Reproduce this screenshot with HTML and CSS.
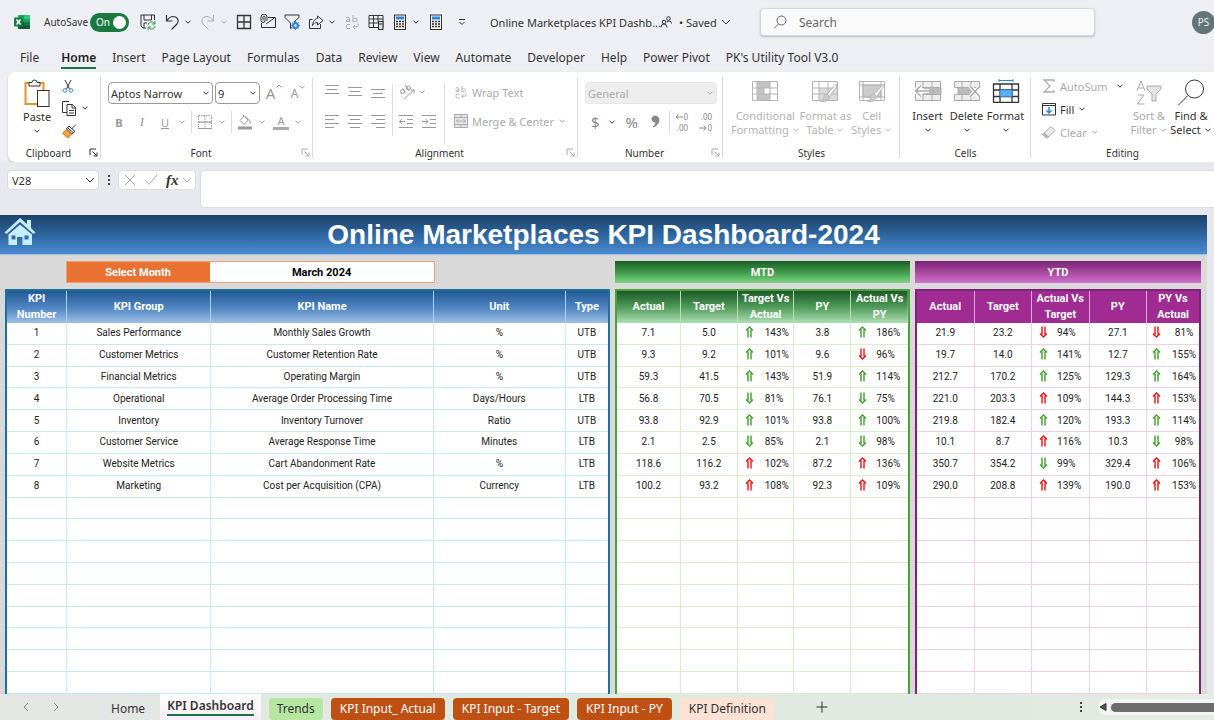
FILE: index.html
```html
<!DOCTYPE html>
<html lang="en">
<head>
<meta charset="utf-8">
<meta name="viewport" content="width=device-width, initial-scale=1">
<title>Online Marketplaces KPI Dashboard</title>
<link rel="stylesheet" href="styles.css">
</head>
<body>
<svg class="sprite" aria-hidden="true">
  <symbol id="chev" viewBox="0 0 8 8"><path d="M1.5 2.7 4 5.2l2.500-2.500"/></symbol>
  <symbol id="chevwide" viewBox="0 0 10 8"><path d="M1 2l4 4 4-4"/></symbol>
  <symbol id="launcher" viewBox="0 0 9 9"><path d="M1 7V1h6M3.500 3.500l4.500 4.500M8 4.500V8H4.500"/></symbol>
  <symbol id="up" viewBox="0 0 9 12"><path d="M1 4.500 4.500 1 8 4.500M3 3.500V11.500M6 3.500V11.500"/></symbol>
  <symbol id="down" viewBox="0 0 9 12"><path d="M1 7.500 4.500 11 8 7.500M3 8.500V.5M6 8.500V.5"/></symbol>
  <symbol id="calc" viewBox="0 0 16 16"><rect x="2.500" y="1" width="11" height="14.500" fill="#f6f2ee"/><rect x="4" y="2.500" width="8" height="3" fill="#2b88d8" stroke="none"/><path d="M4 7.500h8M4 10h8M4 12.500h8" stroke-width="1.500" stroke-dasharray="2 1"/></symbol>
  <symbol id="brush" viewBox="0 0 20 20"><path d="M18.500 1 9 11l2.500 2.500L19 3z" fill="#fff"/><path d="M9 11c-3 0-3 3-3.500 4.500S3 18 2 18c4 1.500 9 0 9.500-4.500z" fill="#ccc"/></symbol>
</svg>

<header class="titlebar">
  <svg class="i16 logo" viewBox="0 0 16 16"><rect x="4" y="1" width="12" height="14" rx="1" fill="#21a366"/><path d="M10 1h5q1 0 1 1v3h-6z" fill="#33c481"/><path d="M4 8h12v6q0 1-1 1H5q-1 0-1-1z" fill="#185c37"/><path d="M10 8h6v3.500h-6z" fill="#107c41"/><rect y="3.500" width="9" height="9" rx="1" fill="#107c41"/><path d="m2.500 5.500 4 5m0-5-4 5" stroke="#fff" stroke-width="1.500"/></svg>
  <label class="autosave"><span>AutoSave</span><input type="checkbox" checked><span class="toggle"><span>On</span></span></label>
  <div class="quick">
    <button aria-label="Save"><svg class="i16" viewBox="0 0 16 16"><path d="M6 14H3l-2-2V1h13.500v5M4 1v5h7.500V1M4 14V9h3"/><path d="M8 11a3.500 3.500 0 0 1 6-2l1 1M15 7v3h-3M15 12a3.500 3.500 0 0 1-6 2l-1-1M8 16v-3h3" stroke="#2ea043"/></svg></button>
    <span class="split"><button aria-label="Undo"><svg class="i16" viewBox="0 0 16 16"><path d="M2.500 1v6h6M2.500 7C5 3.500 8 1.500 11.500 3S14.500 8 13 10L7.500 15.500" stroke-width="1.200"/></svg></button><button aria-label="Undo list"><svg class="i8"><use href="#chev"/></svg></button></span>
    <span class="split dim"><button aria-label="Redo"><svg class="i16" viewBox="0 0 16 16"><path d="M13.500 1v6h-6M13.500 7C11 3.500 8 1.500 4.500 3S1.500 8 3 10l5.500 5.500"/></svg></button><button aria-label="Redo list"><svg class="i8"><use href="#chev"/></svg></button></span>
    <button aria-label="Borders"><svg class="i16" viewBox="0 0 16 16"><path d="M1.500 1.500h13v13h-13zM8 1.500v13M1.500 8h13" stroke-width="1.300"/></svg></button>
    <button aria-label="Email"><svg class="i16" viewBox="0 0 16 16"><path d="M8 3.500h7.500v10H1.500V9M6 10l9-6.500M3 6.500V3.200a1 1 0 0 1 2 0V6.500a2 2 0 0 1-4 0V3a2.500 2.500 0 0 1 6 0v4"/></svg></button>
    <button aria-label="Filter settings"><svg class="i16" viewBox="0 0 16 16"><path d="M1 1h14v2.500L10 8M1 1v2.500L6.500 9v5.500L8 13.500"/><circle cx="11.500" cy="11.500" r="2.500" stroke="#2b88d8" stroke-width="2"/><path d="M11.500 7v9M7 11.500h9M8.500 8.500l6 6M14.500 8.500l-6 6" stroke="#2b88d8"/><circle cx="11.500" cy="11.500" r="1.200" fill="#fff" stroke="none"/></svg></button>
    <span class="split"><button aria-label="Share"><svg class="i16" viewBox="0 0 16 16"><path d="M4.500 5.500H1.500v9h11V10M9.500 2l5.500 4.500-5.500 4.500V8.500C7 8.500 5.500 9.500 4.500 11.500 5 7 7 4.800 9.500 4.500z"/></svg></button><button aria-label="Share options"><svg class="i8"><use href="#chev"/></svg></button></span>
    <button class="dim" aria-label="Wrap"><svg class="i16" viewBox="0 0 16 16"><path d="M2 3.500q3-1.500 3.500 1V8M5.500 5.500Q2 5.500 2 7t3.500 0M9 1v7M9 5q4-2 4 1T9 7M6 10.500q-4-1-4 2t4 2M14 9.500q2 3.500-5 3.500M11 11l-2 2 2 2"/></svg></button>
    <button aria-label="Table"><svg class="i16" viewBox="0 0 16 16"><path d="M1 1.500h14v12H1zM1 5h14M1 9h9M5.500 1.500v12M10 1.500v6"/><rect x="10.500" y="7.500" width="4.500" height="8" fill="#ddd"/><path d="M11 10h3.500"/></svg></button>
    <span class="split"><button aria-label="Calculate"><svg class="i16"><use href="#calc"/></svg></button><button aria-label="Calculate options"><svg class="i8"><use href="#chev"/></svg></button></span>
    <button aria-label="Calculate sheet"><svg class="i16"><use href="#calc"/></svg></button>
    <button class="more" aria-label="Customize toolbar"><svg class="i8" viewBox="0 0 8 8"><path d="M1 1.500h6M1.500 4 4 6.500 6.500 4"/></svg></button>
  </div>
  <div class="doc"><span class="docname">Online Marketplaces KPI Dashb...</span><svg class="i12" viewBox="0 0 12 12"><circle cx="8.500" cy="2.500" r="1.800"/><path d="M6.500 6Q11 3.500 11.500 7.500"/><circle cx="4" cy="6" r="1.800"/><path d="M1 11.500q0-3.500 3-3.500t3 3.500"/></svg><button class="saved">• Saved <svg class="i10"><use href="#chevwide"/></svg></button></div>
  <label class="search"><svg class="i14" viewBox="0 0 14 14"><circle cx="8.500" cy="5.500" r="4.500"/><path d="M5.500 9 1 13.500"/></svg><input type="search" aria-label="Search" placeholder="Search"></label>
  <button class="avatar" aria-label="Account">PS</button>
</header>

<nav class="menu">
  <a href="#">File</a><a href="#" class="current">Home</a><a href="#">Insert</a><a href="#">Page Layout</a><a href="#">Formulas</a><a href="#">Data</a><a href="#">Review</a><a href="#">View</a><a href="#">Automate</a><a href="#">Developer</a><a href="#">Help</a><a href="#">Power Pivot</a><a href="#">PK's Utility Tool V3.0</a>
</nav>

<section class="ribbon" aria-label="Home ribbon">
  <div class="group clipboard">
    <div class="tools">
      <button class="big"><svg class="paste" viewBox="0 0 26 29"><path d="M6 4H1.500v21H13M15 4h4.500v7" stroke="#e8912d" stroke-width="2"/><path d="M5 7V3.500h3q0-2.500 2.500-2.500T13 3.500h3V7z" fill="#fff"/><rect x="13.500" y="11.500" width="11.500" height="16" fill="#fff"/></svg><span>Paste</span><svg class="i8"><use href="#chev"/></svg></button>
      <div class="stack">
        <button aria-label="Cut"><svg class="i14" viewBox="0 0 14 14"><path d="M4 1l4.500 9M10 1 5.500 10"/><circle cx="4" cy="11.500" r="1.800" stroke="#2b88d8"/><circle cx="10" cy="11.500" r="1.800" stroke="#2b88d8"/></svg></button>
        <span class="split"><button aria-label="Copy"><svg class="i16" viewBox="0 0 16 16"><path d="M6 12.500H1.500v-11H8M6 4.500h5.500L14.500 7.500v8H6zM11 4.500v3.500h3.500M8 10.500h5M8 13h5"/></svg></button><button aria-label="Copy options"><svg class="i8"><use href="#chev"/></svg></button></span>
        <button aria-label="Format painter"><svg class="i16" viewBox="0 0 16 16"><path d="M15 1.500 10.500 6M6.500 4.500l5.500 5M8 3l6 5.500-3 2.500L5.500 6z"/><path d="M5.500 6.500 10.500 11 7 15Q4 13 1.500 10z" fill="#f7a13c" stroke="#d97a16"/></svg></button>
      </div>
    </div>
    <div class="caption launch">Clipboard<button aria-label="Clipboard settings"><svg class="i9"><use href="#launcher"/></svg></button></div>
  </div>

  <div class="group font">
    <div class="tools rows">
      <div class="row">
        <span class="pick face"><select aria-label="Font"><option>Aptos Narrow</option></select><svg class="i8"><use href="#chev"/></svg></span>
        <span class="pick size"><select aria-label="Font size"><option>9</option></select><svg class="i8"><use href="#chev"/></svg></span>
        <button class="grow" aria-label="Increase font size">A<svg class="i8" viewBox="0 0 8 8"><path d="M1.500 4.500 4 2l2.500 2.500"/></svg></button><button class="grow small" aria-label="Decrease font size">A<svg class="i8"><use href="#chev"/></svg></button>
      </div>
      <div class="row marks">
        <button class="b">B</button><button class="i">I</button>
        <span class="split"><button class="u">U</button><svg class="i8"><use href="#chev"/></svg></span>
        <i class="bar"></i>
        <span class="split"><button aria-label="Cell borders"><svg class="i14" viewBox="0 0 14 14"><path d="M.5.5h13v13H.5zM7 1v12M1 7h12" stroke-dasharray="1.500 1"/><path d="M0 13.500h14M0 7h14"/></svg></button><svg class="i8"><use href="#chev"/></svg></span>
        <i class="bar"></i>
        <span class="split"><button aria-label="Fill color"><svg class="i16" viewBox="0 0 16 16"><path d="M7 2 3 6.500l4 4 4.500-5zM6 1l5 5M12 6q2 2 1 4"/><path d="M1 14h14" stroke-width="3"/></svg></button><svg class="i8"><use href="#chev"/></svg></span>
        <span class="split"><button class="fontcolor" aria-label="Font color">A</button><svg class="i8"><use href="#chev"/></svg></span>
      </div>
    </div>
    <div class="caption launch">Font<button class="dim" aria-label="Font settings"><svg class="i9"><use href="#launcher"/></svg></button></div>
  </div>

  <div class="group align">
    <div class="tools dim">
      <div class="lines">
        <button aria-label="Top align"><svg class="i14" viewBox="0 0 14 14"><path d="M0 1.500h14M2 5.500h10M0 9.500h14"/></svg></button>
        <button aria-label="Middle align"><svg class="i14" viewBox="0 0 14 14"><path d="M0 3.500h14M2 7.500h10M0 11.500h14"/></svg></button>
        <button aria-label="Bottom align"><svg class="i14" viewBox="0 0 14 14"><path d="M0 5.500h14M2 9.500h10M0 13.500h14"/></svg></button>
        <button aria-label="Align left"><svg class="i14" viewBox="0 0 14 14"><path d="M0 1.500h14M0 5.500h9M0 9.500h14M0 13.500h9"/></svg></button>
        <button aria-label="Center"><svg class="i14" viewBox="0 0 14 14"><path d="M0 1.500h14M2 5.500h10M0 9.500h14M2 13.500h10"/></svg></button>
        <button aria-label="Align right"><svg class="i14" viewBox="0 0 14 14"><path d="M0 1.500h14M5 5.500h9M0 9.500h14M5 13.500h9"/></svg></button>
      </div>
      <div class="indent">
        <span class="split"><button aria-label="Orientation"><svg class="i16" viewBox="0 0 16 16"><circle cx="3.500" cy="7.500" r="2"/><path d="M3.500 4.500l3.500 4M6 1l4.500 5.500"/><circle cx="9.500" cy="4" r="2"/><path d="M5 15 15 6M11.500 6H15v3.500"/></svg></button><svg class="i8"><use href="#chev"/></svg></span>
        <span class="pair"><button aria-label="Decrease indent"><svg class="i14" viewBox="0 0 14 14"><path d="M0 1.500h14M8 5.500h6M8 9.500h6M0 13.500h14M6 7.500H.5M3 5 .5 7.500 3 10"/></svg></button><button aria-label="Increase indent"><svg class="i14" viewBox="0 0 14 14"><path d="M0 1.500h14M8 5.500h6M8 9.500h6M0 13.500h14M0 7.500h6M3.500 5 6 7.500 3.500 10"/></svg></button></span>
      </div>
      <div class="wrap">
        <button><svg class="i14" viewBox="0 0 16 16"><path d="M2 3.500q3-1.500 3.500 1V8M5.500 5.500Q2 5.500 2 7t3.500 0M9 1v7M9 5q4-2 4 1T9 7M6 10.500q-4-1-4 2t4 2M14 9.500q2 3.500-5 3.500M11 11l-2 2 2 2"/></svg>Wrap Text</button>
        <button><svg class="i14" viewBox="0 0 14 14"><path d="M.5.5h13v13H.5zM.5 3.500h13M.5 10.500h13M7 .5v3M7 10.500v3M2.500 7h9M4.500 5l-2 2 2 2M9.500 5l2 2-2 2" fill="#e6e6e6"/></svg>Merge &amp; Center<svg class="i8"><use href="#chev"/></svg></button>
      </div>
    </div>
    <div class="caption launch">Alignment<button class="dim" aria-label="Alignment settings"><svg class="i9"><use href="#launcher"/></svg></button></div>
  </div>

  <div class="group number">
    <div class="tools rows">
      <div class="row"><span class="pick format dim"><select aria-label="Number format" disabled><option>General</option></select><svg class="i8"><use href="#chev"/></svg></span></div>
      <div class="row signs"><span class="split"><button>$</button><svg class="i8 dark"><use href="#chev"/></svg></span><button>%</button><button class="comma" aria-label="Comma style"><svg class="i14" viewBox="0 0 14 14"><path d="M7 1a3 3 0 1 0 1 5.800Q8 10 5 12q6-2 6-7.500Q10.500 1 7 1z" fill="#888"/></svg></button><i class="bar"></i><button class="dec"><span><svg class="i8" viewBox="0 0 8 8"><path d="M8 4H1M3.500 1.500 1 4l2.500 2.500"/></svg>0</span><span>.00</span></button><button class="dec"><span>.00</span><span><svg class="i8" viewBox="0 0 8 8"><path d="M0 4h7M4.500 1.500 7 4 4.500 6.500"/></svg>0</span></button></div>
    </div>
    <div class="caption launch">Number<button class="dim" aria-label="Number settings"><svg class="i9"><use href="#launcher"/></svg></button></div>
  </div>

  <div class="group styles">
    <div class="tools">
      <button class="big"><svg class="cellicon" viewBox="0 0 26 24"><path d="M5 3h13v6H5zM5 9h7v6H5zM5 15h13v7H5z" fill="#c4c4c4" stroke="none"/><path d="M.5 2.500h25v19H.5zM.5 9h25M.5 15h25M5 2.500v19M12 9v6M18 2.500v19"/></svg><span>Conditional<br>Formatting <svg class="i8"><use href="#chev"/></svg></span></button>
      <button class="big"><svg class="cellicon" viewBox="0 0 26 24"><path d="M7 9h18v12H7z" fill="#ddd" stroke="none"/><path d="M.5 2.500h25v19H.5zM.5 9h25M.5 15h25M7 2.500v19M16 2.500v19"/><use href="#brush" x="6" y="4" width="20" height="20"/></svg><span>Format as<br>Table <svg class="i8"><use href="#chev"/></svg></span></button>
      <button class="big"><svg class="cellicon" viewBox="0 0 26 24"><path d="M4 6h18v12H4z" fill="#ccc"/><path d="M.5 2.500h25v19H.5zM.5 6h25M.5 18h25M4 2.500v19M22 2.500v19"/><use href="#brush" x="6" y="4" width="20" height="20"/></svg><span>Cell<br>Styles <svg class="i8"><use href="#chev"/></svg></span></button>
    </div>
    <div class="caption">Styles</div>
  </div>

  <div class="group cellsgroup">
    <div class="tools">
      <button class="big"><svg class="cellicon faded" viewBox="0 0 28 24"><path d="M1.500 2.500h25v6h-25zM1.500 15.500h25v6h-25zM9 2.500v6M18 2.500v6M9 15.500v6M18 15.500v6" fill="#eee"/><path d="M10 8.500h17v7H10zM19 8.500v7" fill="#bbb"/><path d="M15 12H1.500M7 6.500 1.500 12 7 17.500" stroke="#fff" stroke-width="4"/><path d="M15 12H1.500M7 6.500 1.500 12 7 17.500" stroke-width="1.500"/></svg><span>Insert</span><svg class="i8"><use href="#chev"/></svg></button>
      <button class="big"><svg class="cellicon faded" viewBox="0 0 28 24"><path d="M1.500 2.500h25v6h-25zM1.500 15.500h25v6h-25zM9 2.500v6M18 2.500v6M9 15.500v6M18 15.500v6" fill="#eee"/><path d="M5 8.500h14v7H5z" fill="#bbb"/><path d="m17 7 10 11M27 7 17 18" stroke="#fff" stroke-width="4"/><path d="m17 7 10 11M27 7 17 18" stroke-width="1.500"/></svg><span>Delete</span><svg class="i8"><use href="#chev"/></svg></button>
      <button class="big"><svg class="cellicon" viewBox="0 0 26 24"><path d="M.5 5h25v18.500H.5zM.5 11h25M.5 17.500h25M7 5v18.500M19 5v18.500" stroke-width="1.300"/><path d="M7 11h12v6.500H7z" fill="#5db0f5" stroke="#2b88d8"/><path d="M6 1.500h14M6 0v3M20 0v3" stroke="#2b88d8"/></svg><span>Format</span><svg class="i8"><use href="#chev"/></svg></button>
    </div>
    <div class="caption">Cells</div>
  </div>

  <div class="group editing">
    <div class="tools">
      <div class="stack">
        <button class="dim"><svg class="i14" viewBox="0 0 14 14"><path d="M12 3V1H2l6 6-6 6h10v-2" stroke-width="1.300"/></svg>AutoSum<svg class="i8 dark far"><use href="#chev"/></svg></button>
        <button><svg class="i14" viewBox="0 0 14 14"><path d="M.5 1.500h13v11.500H.5zM.5 3.500h13"/><path d="M7 5v6M4.500 8.500 7 11l2.500-2.500" stroke="#2b88d8" stroke-width="1.500"/></svg>Fill<svg class="i8"><use href="#chev"/></svg></button>
        <button class="dim"><svg class="i14" viewBox="0 0 14 14"><path d="M9 1.500 13 5.500 6.500 12 2 8z" fill="#eee"/><path d="M2 8 .5 9.500l4 3.500 2-1z" fill="#bbb"/></svg>Clear<svg class="i8"><use href="#chev"/></svg></button>
      </div>
      <button class="big dim"><svg class="sort" viewBox="0 0 26 28"><path d="M1 12 5 2l4 10M2.500 9h5M1.500 16H8L1.500 25H8.500"/><path d="M11 7h14v3l-5 5v7h-4v-7l-5-5z" fill="#e5e5e5"/></svg><span>Sort &amp;<br>Filter <svg class="i8"><use href="#chev"/></svg></span></button>
      <button class="big"><svg class="find" viewBox="0 0 28 28"><circle cx="17.500" cy="10" r="9"/><path d="M11 16.500 1 26.500"/></svg><span>Find &amp;<br>Select <svg class="i8"><use href="#chev"/></svg></span></button>
    </div>
    <div class="caption">Editing</div>
  </div>
</section>

<section class="formulabar" aria-label="Formula bar">
  <span class="namebox"><input aria-label="Name box" value="V28"><svg class="i10"><use href="#chevwide"/></svg></span>
  <svg class="dots" viewBox="0 0 4 12"><path d="M1 1h2v2H1zM1 5h2v2H1zM1 9h2v2H1z"/></svg>
  <div class="fx"><button aria-label="Cancel"><svg class="i12" viewBox="0 0 12 12"><path d="m1 1 10 10M11 1 1 11"/></svg></button><button aria-label="Enter"><svg class="i14" viewBox="0 0 14 12"><path d="m1 6 4 4.500L13 1"/></svg></button><button class="fn" aria-label="Insert function">fx</button><svg class="i10"><use href="#chevwide"/></svg></div>
  <textarea aria-label="Formula"></textarea>
</section>

<main class="sheet">
  <div class="banner">
    <a href="#" aria-label="Home sheet"><svg class="house" viewBox="0 0 32 29"><path d="M16 1 .5 15.500 2.500 17 16 5l13.500 12L31.500 15.500 27 11V3h-4v4z"/><path d="M16 7.500 4.500 17.500V28H13V20h5.500v8H28V17.500zM7.500 18.500h4v4h-4zM20.500 18.500h4v4h-4z" fill-rule="evenodd"/></svg></a>
    <h1>Online Marketplaces KPI Dashboard-2024</h1>
  </div>
  <div class="panels">
    <div class="selector"><label for="month">Select Month</label><input id="month" value="March 2024"></div>
    <div class="heading mtdbar">MTD</div>
    <div class="heading ytdbar">YTD</div>

    <table class="kpi">
      <colgroup><col class="c10"><col class="c24"><col class="c37"><col class="c22"><col></colgroup>
      <thead><tr><th>KPI<br>Number</th><th>KPI Group</th><th>KPI Name</th><th>Unit</th><th>Type</th></tr></thead>
      <tbody>
        <tr><td>1</td><td>Sales Performance</td><td>Monthly Sales Growth</td><td>%</td><td>UTB</td></tr>
        <tr><td>2</td><td>Customer Metrics</td><td>Customer Retention Rate</td><td>%</td><td>UTB</td></tr>
        <tr><td>3</td><td>Financial Metrics</td><td>Operating Margin</td><td>%</td><td>UTB</td></tr>
        <tr><td>4</td><td>Operational</td><td>Average Order Processing Time</td><td>Days/Hours</td><td>LTB</td></tr>
        <tr><td>5</td><td>Inventory</td><td>Inventory Turnover</td><td>Ratio</td><td>UTB</td></tr>
        <tr><td>6</td><td>Customer Service</td><td>Average Response Time</td><td>Minutes</td><td>LTB</td></tr>
        <tr><td>7</td><td>Website Metrics</td><td>Cart Abandonment Rate</td><td>%</td><td>LTB</td></tr>
        <tr><td>8</td><td>Marketing</td><td>Cost per Acquisition (CPA)</td><td>Currency</td><td>LTB</td></tr>
        <tr><td></td><td></td><td></td><td></td><td></td></tr>
        <tr><td></td><td></td><td></td><td></td><td></td></tr>
        <tr><td></td><td></td><td></td><td></td><td></td></tr>
        <tr><td></td><td></td><td></td><td></td><td></td></tr>
        <tr><td></td><td></td><td></td><td></td><td></td></tr>
        <tr><td></td><td></td><td></td><td></td><td></td></tr>
        <tr><td></td><td></td><td></td><td></td><td></td></tr>
        <tr><td></td><td></td><td></td><td></td><td></td></tr>
        <tr><td></td><td></td><td></td><td></td><td></td></tr>
      </tbody>
    </table>

    <table class="mtd">
      <colgroup><col class="c22"><col><col><col><col></colgroup>
      <thead><tr><th>Actual</th><th>Target</th><th>Target Vs<br>Actual</th><th>PY</th><th>Actual Vs<br>PY</th></tr></thead>
      <tbody>
        <tr><td>7.1</td><td>5.0</td><td class="trend good"><svg><use href="#up"/></svg>143%</td><td>3.8</td><td class="trend good"><svg><use href="#up"/></svg>186%</td></tr>
        <tr><td>9.3</td><td>9.2</td><td class="trend good"><svg><use href="#up"/></svg>101%</td><td>9.6</td><td class="trend bad"><svg><use href="#down"/></svg>96%</td></tr>
        <tr><td>59.3</td><td>41.5</td><td class="trend good"><svg><use href="#up"/></svg>143%</td><td>51.9</td><td class="trend good"><svg><use href="#up"/></svg>114%</td></tr>
        <tr><td>56.8</td><td>70.5</td><td class="trend good"><svg><use href="#down"/></svg>81%</td><td>76.1</td><td class="trend good"><svg><use href="#down"/></svg>75%</td></tr>
        <tr><td>93.8</td><td>92.9</td><td class="trend good"><svg><use href="#up"/></svg>101%</td><td>93.8</td><td class="trend good"><svg><use href="#up"/></svg>100%</td></tr>
        <tr><td>2.1</td><td>2.5</td><td class="trend good"><svg><use href="#down"/></svg>85%</td><td>2.1</td><td class="trend good"><svg><use href="#down"/></svg>98%</td></tr>
        <tr><td>118.6</td><td>116.2</td><td class="trend bad"><svg><use href="#up"/></svg>102%</td><td>87.2</td><td class="trend bad"><svg><use href="#up"/></svg>136%</td></tr>
        <tr><td>100.2</td><td>93.2</td><td class="trend bad"><svg><use href="#up"/></svg>108%</td><td>92.3</td><td class="trend bad"><svg><use href="#up"/></svg>109%</td></tr>
        <tr><td></td><td></td><td></td><td></td><td></td></tr>
        <tr><td></td><td></td><td></td><td></td><td></td></tr>
        <tr><td></td><td></td><td></td><td></td><td></td></tr>
        <tr><td></td><td></td><td></td><td></td><td></td></tr>
        <tr><td></td><td></td><td></td><td></td><td></td></tr>
        <tr><td></td><td></td><td></td><td></td><td></td></tr>
        <tr><td></td><td></td><td></td><td></td><td></td></tr>
        <tr><td></td><td></td><td></td><td></td><td></td></tr>
        <tr><td></td><td></td><td></td><td></td><td></td></tr>
      </tbody>
    </table>

    <table class="ytd">
      <colgroup><col class="c20"><col class="c20"><col class="c20"><col class="c20"><col></colgroup>
      <thead><tr><th>Actual</th><th>Target</th><th>Actual Vs<br>Target</th><th>PY</th><th>PY Vs<br>Actual</th></tr></thead>
      <tbody>
        <tr><td>21.9</td><td>23.2</td><td class="trend bad"><svg><use href="#down"/></svg>94%</td><td>27.1</td><td class="trend bad"><svg><use href="#down"/></svg><span>81%</span></td></tr>
        <tr><td>19.7</td><td>14.0</td><td class="trend good"><svg><use href="#up"/></svg>141%</td><td>12.7</td><td class="trend good"><svg><use href="#up"/></svg><span>155%</span></td></tr>
        <tr><td>212.7</td><td>170.2</td><td class="trend good"><svg><use href="#up"/></svg>125%</td><td>129.3</td><td class="trend good"><svg><use href="#up"/></svg><span>164%</span></td></tr>
        <tr><td>221.0</td><td>203.3</td><td class="trend bad"><svg><use href="#up"/></svg>109%</td><td>144.3</td><td class="trend bad"><svg><use href="#up"/></svg><span>153%</span></td></tr>
        <tr><td>219.8</td><td>182.4</td><td class="trend good"><svg><use href="#up"/></svg>120%</td><td>193.3</td><td class="trend good"><svg><use href="#up"/></svg><span>114%</span></td></tr>
        <tr><td>10.1</td><td>8.7</td><td class="trend bad"><svg><use href="#up"/></svg>116%</td><td>10.3</td><td class="trend good"><svg><use href="#down"/></svg><span>98%</span></td></tr>
        <tr><td>350.7</td><td>354.2</td><td class="trend good"><svg><use href="#down"/></svg>99%</td><td>329.4</td><td class="trend bad"><svg><use href="#up"/></svg><span>106%</span></td></tr>
        <tr><td>290.0</td><td>208.8</td><td class="trend bad"><svg><use href="#up"/></svg>139%</td><td>190.0</td><td class="trend bad"><svg><use href="#up"/></svg><span>153%</span></td></tr>
        <tr><td></td><td></td><td></td><td></td><td></td></tr>
        <tr><td></td><td></td><td></td><td></td><td></td></tr>
        <tr><td></td><td></td><td></td><td></td><td></td></tr>
        <tr><td></td><td></td><td></td><td></td><td></td></tr>
        <tr><td></td><td></td><td></td><td></td><td></td></tr>
        <tr><td></td><td></td><td></td><td></td><td></td></tr>
        <tr><td></td><td></td><td></td><td></td><td></td></tr>
        <tr><td></td><td></td><td></td><td></td><td></td></tr>
        <tr><td></td><td></td><td></td><td></td><td></td></tr>
      </tbody>
    </table>
  </div>
</main>

<footer class="tabs">
  <div class="arrows"><button aria-label="Previous sheet"><svg class="i10" viewBox="0 0 10 10"><path d="M7 1 3 5l4 4"/></svg></button><button aria-label="Next sheet"><svg class="i10" viewBox="0 0 10 10"><path d="m3 1 4 4-4 4"/></svg></button></div>
  <nav class="sheets">
    <a href="#">Home</a><a href="#" class="active"><span>KPI Dashboard</span></a><a href="#" class="green">Trends</a><a href="#" class="rust">KPI Input_ Actual</a><a href="#" class="rust">KPI Input - Target</a><a href="#" class="rust">KPI Input - PY</a><a href="#" class="peach">KPI Definition</a>
  </nav>
  <button class="add" aria-label="New sheet"><svg class="i12" viewBox="0 0 12 12"><path d="M6 .5v11M.5 6h11"/></svg></button>
  <svg class="dots" viewBox="0 0 4 12"><path d="M1 1h2v2H1zM1 5h2v2H1zM1 9h2v2H1z"/></svg>
  <div class="scroll"><svg class="i8" viewBox="0 0 8 8"><path d="M7 .5v7L1 4z" fill="#555"/></svg><div class="thumb"></div></div>
</footer>
</body>
</html>
```

FILE: styles.css
```css
* { box-sizing: border-box; }
body {
  margin: 0;
  height: 100vh;
  min-width: 1100px;
  display: flex;
  flex-direction: column;
  overflow: hidden;
  background: #edeff4;
  color: #333;
  font-family: "Noto Sans", "Open Sans", sans-serif;
  font-size: 12px;
}
button, input, select, textarea { font: inherit; color: inherit; border: 0; background: none; padding: 0; margin: 0; }
button { display: inline-flex; align-items: center; justify-content: center; }
a { color: inherit; text-decoration: none; }
svg { flex: none; fill: none; stroke: currentColor; }
.sprite { position: absolute; width: 0; height: 0; }
.i8 { width: 8px; height: 8px; }
.i9 { width: 9px; height: 9px; }
.i10 { width: 10px; height: 10px; }
.i12 { width: 12px; height: 12px; }
.i14 { width: 14px; height: 14px; }
.i16 { width: 16px; height: 16px; }
.dim { color: #aaa; }
.dark { color: #333; }
.split { display: inline-flex; align-items: center; gap: 4px; }

/* Title bar */
.titlebar { height: 44px; display: flex; align-items: center; padding-left: 14px; flex: none; }
.logo { stroke: none; }
.autosave { display: flex; align-items: center; gap: 2px; margin-left: 14px; font-size: 10px; width: 96px; flex: none; }
.autosave input { position: absolute; opacity: 0; }
.toggle { flex: none; width: 39px; height: 19px; border-radius: 10px; background: #187a3f; color: #fff; display: flex; align-items: center; justify-content: space-between; padding: 0 3px 0 6px; }
.toggle::after { content: ""; width: 13px; height: 13px; border-radius: 50%; background: #fff; }
.quick { display: flex; align-items: center; gap: 8px; }
.more { margin-left: 6px; }
.doc { display: flex; align-items: center; margin-left: 24px; width: 270px; font-size: 11px; white-space: nowrap; }
.docname { width: 170px; }
.saved { gap: 4px; margin-left: 7px; white-space: nowrap; }
.search { display: flex; align-items: center; gap: 12px; width: 335px; height: 28px; padding: 0 12px; background: #fafafa; border: 1px solid #d4d6da; border-radius: 4px; box-shadow: 0 1px 2px #bbb; color: #666; }
.search input { flex: 1; min-width: 0; outline: 0; }
.search input::placeholder { color: #666; opacity: 1; }
.avatar { margin-left: auto; margin-right: -1px; width: 23px; height: 23px; flex: none; border-radius: 50%; background: #64757a; color: #eee; font-size: 10px; }

/* Menu */
.menu { height: 28px; flex: none; display: flex; gap: 16px; padding-left: 20px; white-space: nowrap; }
.menu a { height: 25px; line-height: 28px; }
.menu .current { font-weight: 600; color: #222; margin-left: 6px; border-bottom: 2px solid #1c7044; }

/* Ribbon */
.ribbon { height: 90px; flex: none; margin-left: 8px; background: #fff; border-radius: 7px 0 0 7px; box-shadow: 0 1px 2px #b9bac4; display: grid; grid-template-columns: 93fr 212fr 265fr 145fr 177fr 131fr 183fr; font-size: 11px; white-space: nowrap; }
.group { display: flex; flex-direction: column; min-width: 0; position: relative; }
.group::before { content: ""; position: absolute; top: 5px; bottom: 4px; right: 0; border-right: 1px solid #dcdcdc; }
.group:last-child::before { display: none; }
.tools { display: flex; height: 72px; }
.caption { height: 18px; display: flex; align-items: center; justify-content: center; font-size: 10px; }
.launch { padding-right: 12px; }
.caption button { position: absolute; right: 3px; bottom: 5px; }
.big { flex-direction: column; justify-content: flex-start; line-height: 14px; }
.big > .i8 { margin-top: 3px; }
.rows { flex-direction: column; gap: 7px; padding-top: 10px; }
.row { display: flex; align-items: center; height: 22px; }
.bar { width: 1px; height: 22px; background: #ddd; }
.clipboard .tools { gap: 8px; padding: 7px 0 0 15px; }
.paste { width: 26px; height: 29px; margin-bottom: 2px; }
.clipboard .stack { display: flex; flex-direction: column; justify-content: space-between; align-items: flex-start; height: 60px; padding-left: 2px; }
.font .tools { padding-left: 7px; }
.pick { display: grid; grid-template-columns: 1fr 8px; align-items: center; height: 22px; border: 1px solid #999; border-radius: 4px; padding: 0 2px; }
.pick select { appearance: none; grid-area: 1 / 1 / 2 / 3; height: 20px; min-width: 0; outline: 0; opacity: 1; }
.pick svg { grid-area: 1 / 2; pointer-events: none; }
.face { width: 105px; margin-right: 2px; }
.size { width: 45px; margin-right: 5px; }
.grow { font-size: 15px; width: 19px; height: 20px; margin-right: 5px; color: #999; }
.grow svg { align-self: flex-start; }
.grow.small { font-size: 12px; }
.marks { color: #999; }
.marks button { width: 16px; }
.marks .b { font-weight: 700; margin: 0 7px 0 3px; }
.marks .i { font-style: italic; font-family: "Liberation Serif", serif; font-size: 13px; margin-right: 7px; }
.marks .u { text-decoration: underline; }
.marks .split { gap: 5px; }
.marks .bar { margin: 0 5px; }
.marks .split + .split { margin-left: 7px; }
.fontcolor { border-bottom: 3px solid #aaa; height: 16px; line-height: 13px; }
.align .tools { padding: 12px 0 0 12px; color: #999; }
.lines { display: grid; grid-template-columns: repeat(3, 14px); gap: 16px 9px; align-content: start; }
.indent { display: flex; flex-direction: column; gap: 14px; margin-left: 7px; padding-left: 6px; border-left: 1px solid #ddd; width: 52px; height: 52px; }
.indent .split { gap: 3px; }
.pair { display: flex; gap: 9px; }
.wrap { display: flex; flex-direction: column; align-items: flex-start; gap: 13px; border-left: 1px solid #ddd; padding-left: 9px; color: #aaa; }
.wrap button { gap: 4px; height: 16px; }
.number .tools { padding-left: 7px; }
.format { width: 132px; background: #eee; border-color: #e6e6e6; }
.signs { color: #888; font-size: 15px; padding-left: 6px; gap: 10px; }
.signs .split { gap: 8px; }
.comma { margin-right: -3px; }
.signs .bar { margin-right: -6px; }
.dec { flex-direction: column; font-size: 8px; line-height: 11px; align-items: flex-end; width: 14px; }
.dec span { display: flex; align-items: center; }
.styles .tools { padding: 7px 0 0 8px; color: #b4b4b4; }
.cellicon { width: 28px; height: 24px; margin-bottom: 6px; }
.faded { color: #aaa; }
.cellsgroup .tools { padding: 7px 0 0 10px; gap: 4px; }
.cellsgroup .big { width: 35px; }
.editing .tools { padding: 7px 0 0 11px; }
.editing .stack { display: flex; flex-direction: column; gap: 9px; width: 86px; align-items: flex-start; }
.editing .stack button { gap: 4px; height: 14px; }
.editing .far { margin-left: 4px; }
.editing .big { width: 42px; }
.sort { width: 26px; height: 28px; }
.find { width: 28px; height: 28px; }
.editing .big span { margin-top: 2px; }

/* Formula bar */
.formulabar { height: 53px; flex: none; display: flex; align-items: flex-start; padding: 8px 0 0 7px; background: #e8e9ee; }
.namebox { display: flex; align-items: center; width: 92px; height: 20px; background: #fff; border: 1px solid #d8d8de; border-radius: 4px; padding: 0 4px; }
.namebox input { width: 73px; font-size: 11px; outline: 0; }
.dots { width: 4px; height: 12px; fill: #444; stroke: none; }
.formulabar .dots { margin: 4px 7px 0 8px; }
.fx { display: flex; align-items: center; gap: 8px; width: 78px; height: 20px; background: #fff; border: 1px solid #dcdce2; border-radius: 4px; padding: 0 5px; color: #aaa; margin-right: 4px; }
.fx .fn { color: #333; font: italic 700 15px "Liberation Serif", serif; }
.fx .i10 { margin-left: -5px; }
.formulabar textarea { flex: 1; height: 38px; background: #fff; border: 1px solid #dcdce2; border-right: 0; border-radius: 5px 0 0 5px; resize: none; outline: 0; }

/* Worksheet */
.sheet { flex: 1; min-height: 0; display: flex; flex-direction: column; background: #d9d9d9; border-right: 7px solid #e6e9ec; }
.banner { height: 40px; flex: none; display: flex; align-items: center; background: linear-gradient(#1b4168, #2f659f 50%, #4a8bd2); border-bottom: 1px solid #9cc0e8; }
.banner a { width: 40px; height: 36px; padding-left: 4px; display: flex; }
.house { width: 32px; height: 29px; fill: #c5efff; stroke: none; }
.banner h1 { flex: 1; margin: 0; padding-right: 40px; text-align: center; color: #fff; font: 700 28px "Liberation Sans", sans-serif; }
.panels { flex: 1; min-height: 0; display: grid; grid-template-columns: 605fr 295fr 286fr; grid-template-rows: 22px 1fr; gap: 6px 5px; padding: 6px 6px 0 5px; font-family: Roboto, "Noto Sans", sans-serif; }
.selector { display: flex; margin: 0 29% 0 10%; font-weight: 700; font-size: 11px; border: 1px solid #f0a070; background: #fff; }
.selector label { width: 39%; background: #e97132; color: #fff; display: flex; align-items: center; justify-content: center; }
.selector input { flex: 1; min-width: 0; text-align: center; color: #000; outline: 0; }
.heading { color: #fff; font-weight: 700; font-size: 11px; display: flex; align-items: center; justify-content: center; }
.mtdbar { background: linear-gradient(#1a5c24, #3f9a49 50%, #7fd584); }
.ytdbar { background: linear-gradient(#7c2273, #d070cc); }
table { border-collapse: separate; border-spacing: 0; table-layout: fixed; width: 100%; height: 100%; background: #fff; font-size: 10px; color: #222; text-align: center; }
th { height: 32px; padding: 0; color: #fff; font-size: 11px; line-height: 16px; border-right: 1px solid; }
td { height: 21px; padding: 0; line-height: 14px; border-right: 1px solid; border-bottom: 1px solid; border-color: inherit; }
th:last-child, td:last-child { border-right: 0; }
tbody, tr { border-color: inherit; }
.c10 { width: 10%; }
.c20 { width: 20.4%; }
.c22 { width: 22%; }
.c24 { width: 24%; }
.c37 { width: 37%; }
.kpi { border: 2px solid #1c7296; border-bottom: 0; }
.kpi tbody { border-color: #c5eaf4; }
.kpi th { border-color: #a8d8f0; }
.kpi thead { background: linear-gradient(#235a96, #4c83c0 50%, #9dbfe6); }
.mtd { border: 2px solid #4ea03c; border-bottom: 0; }
.mtd tbody { border-color: #d8efcc; }
.mtd th { border-color: #b8e0b0; }
.mtd thead { background: linear-gradient(#1c5a26, #4f9a59 50%, #addfb3); }
.ytd { border: 2px solid #7c2278; border-bottom: 0; }
.ytd tbody { border-color: #f1cfe8; }
.ytd th { border-color: #e0a8dc; }
.ytd thead { background: #a02b93; }
.trend { text-align: left; padding-left: 7px; }
.trend svg { width: 9px; height: 12px; margin-right: 11px; vertical-align: -2px; stroke-width: 1.4; }
.mtd .trend:last-child svg, .ytd .trend svg { margin-right: 9px; }
.ytd .trend:last-child { padding-left: 5px; }
.trend span { display: inline-block; width: 28px; text-align: center; }
.good svg { color: #3f9f26; }
.bad svg { color: #ee1111; }

/* Sheet tabs */
.tabs { height: 26px; flex: none; display: flex; align-items: center; background: linear-gradient(90deg, #e4e6e4, #dfeadf 50%, #e3ebe3); padding-left: 21px; }
.arrows { display: flex; gap: 20px; color: #888; width: 76px; }
.sheets { display: flex; align-items: flex-end; gap: 8px; height: 26px; white-space: nowrap; }
.sheets a { height: 22px; line-height: 21px; padding: 0 9px; border-radius: 4px; }
.sheets a:first-child { padding: 0 7px 0 14px; }
.sheets .active { height: 26px; padding: 0 7px; background: linear-gradient(#fff, #f7edf8); font-weight: 600; border-radius: 0; }
.active span { display: block; height: 22px; line-height: 24px; border-bottom: 2px solid #1c7044; }
.sheets .green { background: #b5e6a2; padding: 0 8px; }
.rust { background: #be5014; color: #fff; }
.peach { background: #fbe2d5; }
.add { margin-left: 41px; }
.tabs > .dots { margin-left: auto; }
.scroll { display: flex; align-items: center; gap: 4px; margin-left: 15px; width: 116px; height: 16px; padding-left: 1px; border-radius: 8px 0 0 8px; background: #f4f6f4; }
.thumb { flex: 1; height: 9px; border-radius: 5px 0 0 5px; background: #6d6d6d; }
```
